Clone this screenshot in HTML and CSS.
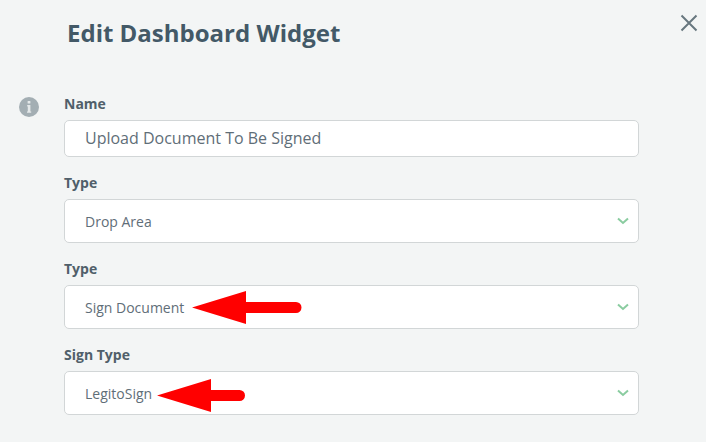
FILE: index.html
```html
<!DOCTYPE html>
<html lang="en">
<head>
    <meta charset="UTF-8">
    <meta name="viewport" content="width=device-width, initial-scale=1.0">
    <title>Edit Dashboard Widget</title>
    <link rel="stylesheet" href="styles.css">
</head>
<body>
    <header class="dialog-header">
        <h1>Edit Dashboard Widget</h1>
        <svg class="close-icon" width="18" height="18" viewBox="0 0 18 18">
            <path d="M1.5 1.5 L16.5 16.5 M16.5 1.5 L1.5 16.5" />
        </svg>
    </header>
    <div class="dialog-body">
        <div class="info-icon">
            <svg width="20" height="20" viewBox="0 0 20 20">
                <circle cx="10" cy="10" r="10" fill="#a3aeb3" />
                <rect x="8.6" y="4" width="2.8" height="2.4" rx="0.5" fill="#e4e8e9" />
                <path d="M8.2 8 H11.4 V14.4 H12.2 V15.8 H8 V14.4 H8.8 V9.4 H8.2 Z" fill="#e4e8e9" />
            </svg>
        </div>
        <form class="form">
            <div class="form-group">
                <label>Name</label>
                <div class="text-input">Upload Document To Be Signed</div>
            </div>
            <div class="form-group">
                <label>Type</label>
                <div class="select">
                    <span>Drop Area</span>
                    <svg class="chevron" width="12" height="8" viewBox="0 0 12 8"><path d="M1 1.5 L6 6 L11 1.5" /></svg>
                </div>
            </div>
            <div class="form-group">
                <label>Type</label>
                <div class="select">
                    <span>Sign Document</span>
                    <svg class="chevron" width="12" height="8" viewBox="0 0 12 8"><path d="M1 1.5 L6 6 L11 1.5" /></svg>
                    <svg class="arrow arrow-long" width="110" height="34" viewBox="0 0 110 34">
                        <path d="M0 16.5 L54 0 V11 H104 A5.5 5.5 0 0 1 104 22 H54 V33 Z" />
                    </svg>
                </div>
            </div>
            <div class="form-group">
                <label>Sign Type</label>
                <div class="select">
                    <span>LegitoSign</span>
                    <svg class="chevron" width="12" height="8" viewBox="0 0 12 8"><path d="M1 1.5 L6 6 L11 1.5" /></svg>
                    <svg class="arrow arrow-short" width="88" height="34" viewBox="0 0 88 34">
                        <path d="M0 16.5 L54 0 V11 H82.500 A5.5 5.5 0 0 1 82.500 22 H54 V33 Z" />
                    </svg>
                </div>
            </div>
        </form>
    </div>
</body>
</html>
```

FILE: styles.css
```css
body {
    font-family: "Open Sans", sans-serif;
    margin: 0;
    padding: 0;
    background-color: #f3f5f5;
    color: #4a5a66;
    height: 442px;
    overflow: hidden;
}
.dialog-header {
    display: flex;
    justify-content: space-between;
    align-items: flex-start;
    padding: 14px 8px 0 67px;
    height: 94px;
    box-sizing: border-box;
}
.dialog-header h1 {
    margin: 0;
    font-size: 24px;
    line-height: 38px;
    font-weight: 700;
    color: #435967;
}
.close-icon {
    fill: none;
    stroke: #67777f;
    stroke-width: 2;
}
.dialog-body {
    display: flex;
    padding-left: 19px;
}
.info-icon {
    width: 45px;
    padding-top: 3px;
    height: 20px;
}
.info-icon svg {
    display: block;
}
.form {
    width: 575px;
}
.form-group {
    margin-bottom: 16px;
}
.form-group label {
    display: block;
    font-size: 14px;
    line-height: 20px;
    font-weight: 700;
    color: #505f6a;
    margin-bottom: 6px;
}
.text-input,
.select {
    box-sizing: border-box;
    background: white;
    border: 1px solid #d2d6d7;
    border-radius: 5px;
    padding-left: 20px;
}
.text-input {
    height: 37px;
    line-height: 35px;
    font-size: 16px;
    color: #5f6e78;
}
.select {
    position: relative;
    display: flex;
    align-items: center;
    justify-content: space-between;
    height: 44px;
    padding-right: 9px;
    font-size: 14px;
    color: #5f6e78;
}
.chevron {
    fill: none;
    stroke: #8accA0;
    stroke-width: 2;
}
.arrow {
    position: absolute;
    fill: #ff0000;
}
.arrow-long {
    top: 5px;
    left: 127px;
}
.arrow-short {
    top: 7px;
    left: 92px;
}
```
